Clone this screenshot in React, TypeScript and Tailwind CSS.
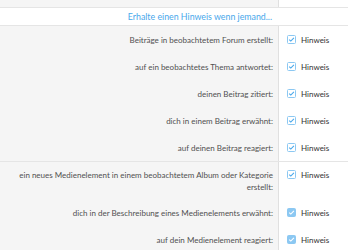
const rows: { label: string[]; filled?: boolean; groupStart?: boolean }[] = [
  { label: ['Beiträge in beobachtetem Forum erstellt:'] },
  { label: ['auf ein beobachtetes Thema antwortet:'] },
  { label: ['deinen Beitrag zitiert:'] },
  { label: ['dich in einem Beitrag erwähnt:'] },
  { label: ['auf deinen Beitrag reagiert:'] },
  {
    label: [
      'ein neues Medienelement in einem beobachtetem Album oder Kategorie',
      'erstellt:',
    ],
    groupStart: true,
  },
  { label: ['dich in der Beschreibung eines Medienelements erwähnt:'], filled: true },
  { label: ['auf dein Medienelement reagiert:'], filled: true },
];

function Checkbox({ filled }: { filled?: boolean }) {
  return (
    <svg width="9" height="9" viewBox="0 0 9 9" className="shrink-0">
      <rect
        x="0.5"
        y="0.5"
        width="8"
        height="8"
        rx="1"
        fill={filled ? '#8cc8f2' : '#ffffff'}
        stroke="#8cc8f2"
      />
      <path
        d="M2.2 4.6 L3.8 6.1 L6.9 2.9"
        fill="none"
        stroke={filled ? '#ffffff' : '#47a7eb'}
        strokeWidth="1.1"
      />
    </svg>
  );
}

export default function App() {
  return (
    <div className="w-[348px] h-[250px] overflow-hidden bg-[#f5f5f5] font-['Lato',sans-serif] text-[8px] text-[#505050]">
      <div className="flex h-[7px]">
        <div className="w-[279px] border-r border-[#e0e0e0]" />
        <div className="flex-1 bg-white" />
      </div>

      <div className="flex h-[19px] bg-white border-y border-[#e5e5e5]">
        <div className="w-[279px] flex items-center justify-end pr-[7px] text-[8.8px] text-[#47a7eb]">
          Erhalte einen Hinweis wenn jemand...
        </div>
        <div className="flex-1" />
      </div>

      {rows.map((row, i) => (
        <div
          key={i}
          className={`flex ${row.groupStart ? 'border-t border-[#e5e5e5]' : ''}`}
        >
          <div
            className={`w-[279px] border-r border-[#e0e0e0] pr-[5px] text-right leading-[12px] ${row.groupStart ? 'py-[6.5px]' : 'py-[7.5px]'}`}
          >
            {row.label.map((l, j) => (
              <div key={j} className="whitespace-nowrap">
                {l}
              </div>
            ))}
          </div>
          <div
            className={`flex-1 bg-white pl-[8px] ${row.groupStart ? 'py-[6.5px]' : 'py-[7.5px]'}`}
          >
            <div className="flex items-center gap-[5px] h-[12px] text-[#333]">
              <Checkbox filled={row.filled} />
              <span>Hinweis</span>
            </div>
          </div>
        </div>
      ))}
    </div>
  );
}
